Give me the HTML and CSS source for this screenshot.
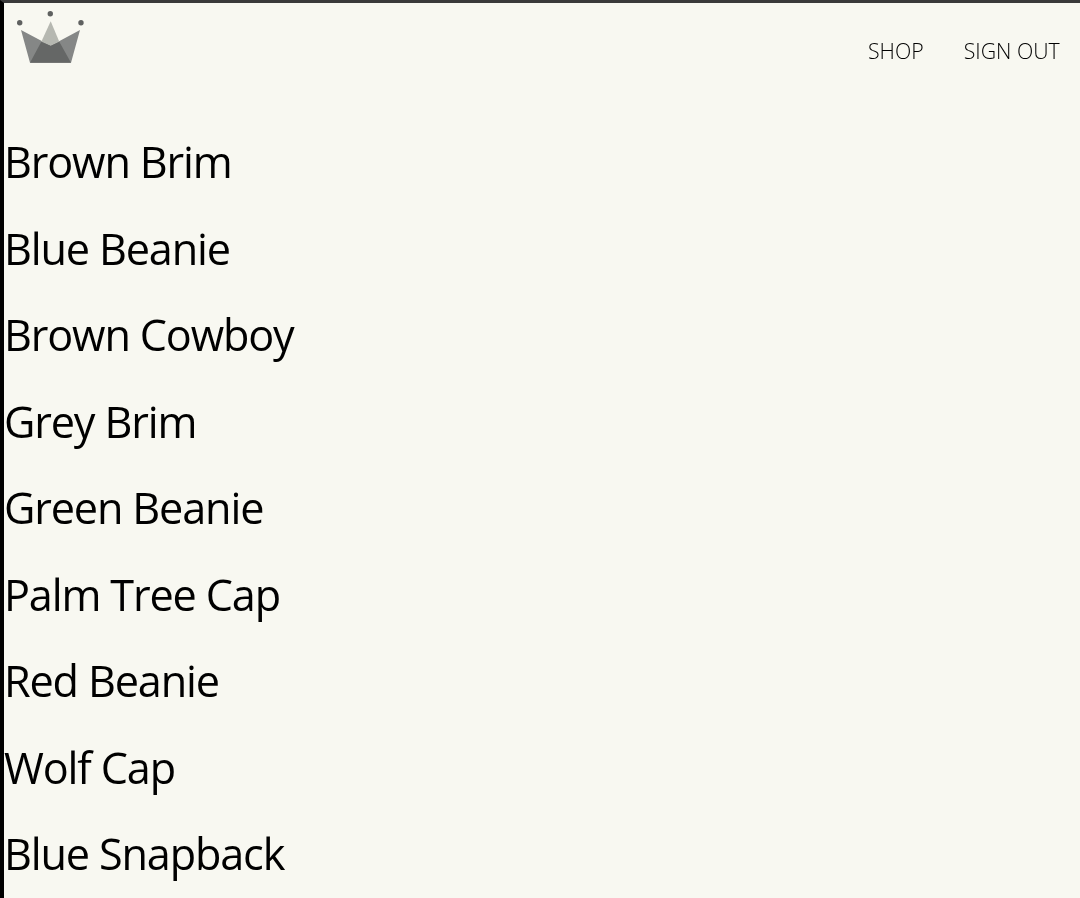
FILE: index.html
```html
<!DOCTYPE html>
<html lang="en">
<head>
  <meta charset="UTF-8">
  <title>Shop</title>
  <link rel="stylesheet" href="styles.css">
</head>
<body>
  <header class="header">
    <a class="logo" href="#">
      <svg width="70" height="56" viewBox="0 0 70 56">
        <circle cx="3.700" cy="12.700" r="2.700" fill="#5f6160"/>
        <circle cx="34.300" cy="3.700" r="2.700" fill="#5f6160"/>
        <circle cx="65" cy="12.700" r="2.700" fill="#5f6160"/>
        <polygon points="5,20 14,52.700 55,52.700 64,20 34.700,35.700" fill="#858786"/>
        <polygon points="34.700,11.300 25.300,31.700 34.700,35.700 43.300,31.700" fill="#b6b8b1"/>
        <polygon points="25.300,31.700 34.700,35.700 43.300,31.700 55,52.700 14,52.700" fill="#656766"/>
      </svg>
    </a>
    <nav class="nav">
      <a class="nav-link" href="#">SHOP</a>
      <a class="nav-link" href="#">SIGN OUT</a>
    </nav>
  </header>
  <main class="items">
    <h2 class="item">Brown Brim</h2>
    <h2 class="item">Blue Beanie</h2>
    <h2 class="item">Brown Cowboy</h2>
    <h2 class="item">Grey Brim</h2>
    <h2 class="item">Green Beanie</h2>
    <h2 class="item">Palm Tree Cap</h2>
    <h2 class="item">Red Beanie</h2>
    <h2 class="item">Wolf Cap</h2>
    <h2 class="item">Blue Snapback</h2>
  </main>
</body>
</html>
```

FILE: styles.css
```css
html, body { height: 100%; }
body { margin: 0; font-family: "Open Sans", sans-serif; background: #f8f8f1; color: #000; border-top: 3px solid #3a3a3a; border-left: 4px solid #000; box-sizing: border-box; overflow: hidden; }
.header { display: flex; justify-content: space-between; height: 115.6px; box-sizing: border-box; padding: 7px 20px 0 12px; }
.logo { display: block; height: 56px; }
.logo svg { display: block; }
.nav { display: flex; gap: 40px; padding-top: 26px; will-change: transform; }
.nav-link { font-size: 21.3px; font-weight: 300; color: #000; text-decoration: none; line-height: 29px; }
.items { will-change: transform; }
.item { margin: 0; font-size: 43.2px; font-weight: 400; line-height: 86.5px; height: 86.5px; letter-spacing: -1.15px; }
```
